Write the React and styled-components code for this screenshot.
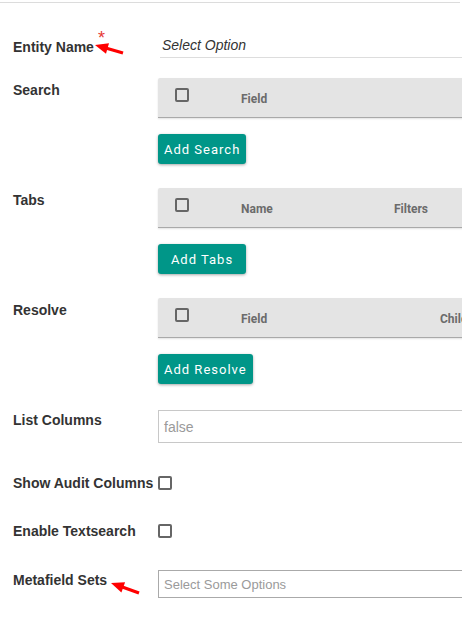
import React from "react";
import styled, { createGlobalStyle } from "styled-components";

const GlobalStyle = createGlobalStyle`
  html, body {
    margin: 0;
    padding: 0;
    background: #fff;
    overflow: hidden;
    font-family: "Liberation Sans", Arial, sans-serif;
  }
`;

const Arrow = ({ left, top, head, tail }) => {
  const dx = tail[0] - head[0];
  const dy = tail[1] - head[1];
  const len = Math.hypot(dx, dy);
  const ux = dx / len;
  const uy = dy / len;
  const bx = head[0] + ux * 13;
  const by = head[1] + uy * 13;
  const px = -uy * 5.5;
  const py = ux * 5.5;
  return (
    <ArrowSvg style={{ left, top }} width="44" height="24" viewBox="0 0 44 24">
      <line
        x1={bx - ux * 1}
        y1={by - uy * 1}
        x2={tail[0]}
        y2={tail[1]}
        stroke="#f00"
        strokeWidth="3.2"
      />
      <polygon
        points={`${head[0]},${head[1]} ${bx + px},${by + py} ${bx - px},${by - py}`}
        fill="#f00"
      />
    </ArrowSvg>
  );
};

const Header = ({ columns }) => (
  <TableHeader>
    <CheckCell>
      <Checkbox />
    </CheckCell>
    {columns.map((c) => (
      <HeadCell key={c.name} $width={c.width}>
        {c.name}
      </HeadCell>
    ))}
  </TableHeader>
);

const App = () => {
  return (
    <>
      <GlobalStyle />
      <Page>
        <TopBar />
        <Form>
          <Row $mb={20}>
            <Label $offset={6}>
              Entity Name<Required>*</Required>
              <Arrow left={77} top={9} head={[5, 6]} tail={[33, 14]} />
            </Label>
            <SelectLine>Select Option</SelectLine>
          </Row>

          <Row $mb={24}>
            <Label $offset={2}>Search</Label>
            <Block>
              <Header columns={[{ name: "Field", width: 260 }]} />
              <Button>Add Search</Button>
            </Block>
          </Row>

          <Row $mb={24}>
            <Label $offset={2}>Tabs</Label>
            <Block>
              <Header
                columns={[
                  { name: "Name", width: 153 },
                  { name: "Filters", width: 120 },
                ]}
              />
              <Button>Add Tabs</Button>
            </Block>
          </Row>

          <Row $mb={26}>
            <Label $offset={2}>Resolve</Label>
            <Block>
              <Header
                columns={[
                  { name: "Field", width: 199 },
                  { name: "Children", width: 120 },
                ]}
              />
              <Button>Add Resolve</Button>
            </Block>
          </Row>

          <Row $mb={30}>
            <Label $offset={0}>List Columns</Label>
            <TextBox $height={33} $size={14}>
              false
            </TextBox>
          </Row>

          <Row $mb={28} $center>
            <Label $offset={0}>Show Audit Columns</Label>
            <Checkbox />
          </Row>

          <Row $mb={29} $center>
            <Label $offset={0}>Enable Textsearch</Label>
            <Checkbox />
          </Row>

          <Row $mb={0}>
            <Label $offset={0}>
              Metafield Sets
              <Arrow left={93} top={6} head={[5, 7]} tail={[33, 17]} />
            </Label>
            <TextBox $height={28} $size={13} $border="#aaa">
              Select Some Options
            </TextBox>
          </Row>
        </Form>
      </Page>
    </>
  );
};

const Page = styled.div`
  width: 462px;
  height: 622px;
  overflow: hidden;
`;

const TopBar = styled.div`
  height: 2px;
  width: 460px;
  border-bottom: 1px solid #dcdcdc;
  margin-bottom: 7px;
  box-shadow: 0 8px 0 -7px #f4f4f4;
`;

const Form = styled.div`
  padding: 20px 0 0 13px;
`;

const Row = styled.div`
  display: grid;
  grid-template-columns: 145px 500px;
  align-items: ${(p) => (p.$center ? "center" : "start")};
  margin-bottom: ${(p) => p.$mb}px;
`;

const Label = styled.div`
  position: relative;
  padding-top: ${(p) => p.$offset}px;
  font-size: 14px;
  line-height: 20px;
  font-weight: 700;
  color: #333;
  white-space: nowrap;
`;

const Required = styled.span`
  position: relative;
  top: -8px;
  margin-left: 4px;
  color: #e53935;
  font-weight: 400;
  font-size: 18px;
`;

const ArrowSvg = styled.svg`
  position: absolute;
  overflow: visible;
`;

const SelectLine = styled.div`
  width: 302px;
  margin-left: 2px;
  height: 27px;
  box-sizing: content-box;
  border-bottom: 1px solid #ddd;
  padding-left: 2px;
  font-size: 14px;
  line-height: 31px;
  font-style: italic;
  color: #333;
`;

const Block = styled.div`
  display: flex;
  flex-direction: column;
  align-items: flex-start;
  gap: 16px;
`;

const TableHeader = styled.div`
  display: flex;
  align-items: center;
  width: 500px;
  height: 39px;
  background: #e4e4e4;
  border-bottom: 1px solid #a9a9a9;
  box-shadow: 0 1px 2px rgba(0, 0, 0, 0.12);
  border-radius: 2px 0 0 0;
`;

const CheckCell = styled.div`
  width: 83px;
  box-sizing: border-box;
  padding-left: 17px;
  align-self: flex-start;
  padding-top: 10px;
  display: flex;
`;

const HeadCell = styled.div`
  width: ${(p) => p.$width}px;
  flex: none;
  font-family: Roboto, "Liberation Sans", sans-serif;
  font-size: 12px;
  font-weight: 700;
  color: #6b6b6b;
  padding-top: 3px;
`;

const Checkbox = styled.span`
  display: inline-block;
  width: 14px;
  height: 14px;
  box-sizing: border-box;
  border: 2px solid #666;
  border-radius: 2px;
  background: transparent;
`;

const Button = styled.button`
  min-width: 88px;
  height: 30px;
  padding: 0 6px;
  border: none;
  border-radius: 3px;
  background: #009688;
  color: #fff;
  font-family: Roboto, "Liberation Sans", sans-serif;
  font-size: 13px;
  letter-spacing: 1px;
  box-shadow: 0 1px 3px rgba(0, 0, 0, 0.35);
  cursor: pointer;
`;

const TextBox = styled.div`
  width: 320px;
  height: ${(p) => p.$height}px;
  box-sizing: border-box;
  border: 1px solid ${(p) => p.$border || "#c8c8c8"};
  padding-left: 5px;
  display: flex;
  align-items: center;
  font-size: ${(p) => p.$size}px;
  color: #9a9a9a;
`;

export default App;
